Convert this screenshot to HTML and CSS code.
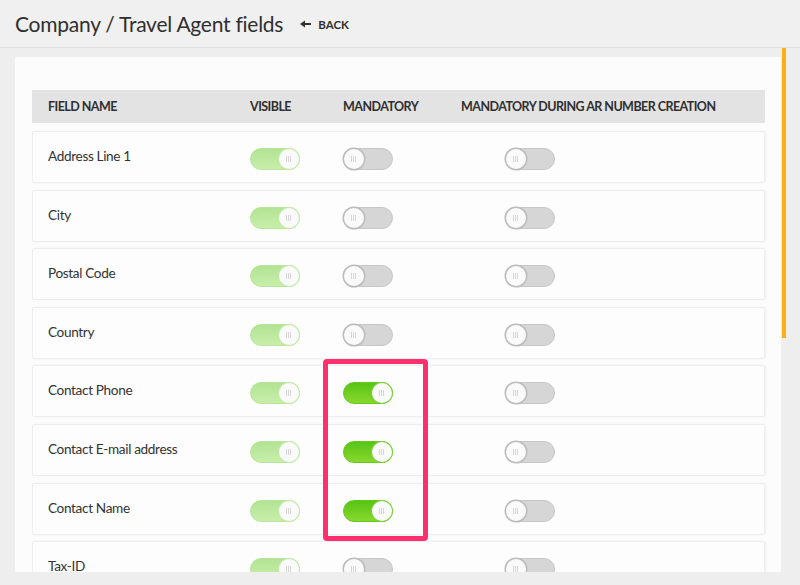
FILE: index.html
```html
<!DOCTYPE html>
<html>
<head>
<meta charset="utf-8">
<link rel="stylesheet" href="styles.css">
</head>
<body>
<header class="topbar">
  <h1 class="title">Company / Travel Agent fields</h1>
  <a class="back" href="#"><svg class="arrow" width="11" height="8" viewBox="0 0 11 8"><path d="M0 4 L5 0.5 L5 7.5 Z" fill="#2f2f2f"/><rect x="4" y="3" width="7" height="2" fill="#2f2f2f"/></svg>BACK</a>
</header>
<div class="viewport">
  <div class="card">
    <div class="thead">
      <div>FIELD NAME</div>
      <div>VISIBLE</div>
      <div>MANDATORY</div>
      <div>MANDATORY DURING AR NUMBER CREATION</div>
    </div>
    <div class="rows">
      <div class="row"><div class="name">Address Line 1</div><div><span class="tg vis"><i></i></span></div><div><span class="tg off"><i></i></span></div><div><span class="tg off ar"><i></i></span></div></div>
      <div class="row"><div class="name">City</div><div><span class="tg vis"><i></i></span></div><div><span class="tg off"><i></i></span></div><div><span class="tg off ar"><i></i></span></div></div>
      <div class="row"><div class="name">Postal Code</div><div><span class="tg vis"><i></i></span></div><div><span class="tg off"><i></i></span></div><div><span class="tg off ar"><i></i></span></div></div>
      <div class="row"><div class="name">Country</div><div><span class="tg vis"><i></i></span></div><div><span class="tg off"><i></i></span></div><div><span class="tg off ar"><i></i></span></div></div>
      <div class="row"><div class="name">Contact Phone</div><div><span class="tg vis"><i></i></span></div><div><span class="tg on"><i></i></span></div><div><span class="tg off ar"><i></i></span></div></div>
      <div class="row"><div class="name">Contact E-mail address</div><div><span class="tg vis"><i></i></span></div><div><span class="tg on"><i></i></span></div><div><span class="tg off ar"><i></i></span></div></div>
      <div class="row"><div class="name">Contact Name</div><div><span class="tg vis"><i></i></span></div><div><span class="tg on"><i></i></span></div><div><span class="tg off ar"><i></i></span></div></div>
      <div class="row"><div class="name">Tax-ID</div><div><span class="tg vis"><i></i></span></div><div><span class="tg off"><i></i></span></div><div><span class="tg off ar"><i></i></span></div></div>
    </div>
    <div class="highlight"></div>
  </div>
  <div class="thumb"></div>
</div>
</body>
</html>
```
FILE: styles.css
```css
* { box-sizing: border-box; }
html, body { margin: 0; padding: 0; }
body {
  background: #eeeeee;
  font-family: "Lato", "Liberation Sans", sans-serif;
  color: #333;
  width: 800px;
  height: 585px;
  overflow: hidden;
}
.topbar {
  height: 48px;
  border-bottom: 1px solid #e0e0e0;
  background: #f0f0f0;
  display: flex;
  align-items: center;
  padding-left: 15px;
}
.title {
  margin: 0;
  font-weight: 400;
  font-size: 21px;
  color: #2f2f2f;
  letter-spacing: -0.25px;
}
.back {
  margin-left: 17px;
  margin-top: 1px;
  font-size: 11.5px;
  font-weight: 700;
  color: #2f2f2f;
  text-decoration: none;
  display: flex;
  align-items: center;
}
.back .arrow {
  margin-right: 7px;
}
.viewport {
  position: relative;
  height: 524px;
  overflow: hidden;
  padding: 9px 19px 0 15px;
}
.card {
  position: relative;
  background: #fcfcfc;
  padding: 33px 16px 0 17px;
  height: 600px;
}
.thead, .row {
  display: grid;
  grid-template-columns: 202px 93px 118px 1fr;
  padding-left: 16px;
  align-items: center;
}
.thead {
  height: 33px;
  background: #e3e3e3;
  font-size: 12.5px;
  font-weight: 700;
  color: #2f2f2f;
  letter-spacing: -0.55px;
}
.rows {
  display: flex;
  flex-direction: column;
  gap: 6.6px;
  padding-top: 8px;
}
.row {
  height: 52px;
  border: 1px solid #eeeeee;
  border-radius: 2px;
  background: #fdfdfd;
  box-shadow: 1px 0 2px rgba(0,0,0,0.05);
  font-size: 13.6px;
  letter-spacing: -0.35px;
  color: #333;
  padding-left: 15px;
}
.row .name { margin-top: -2px; }
.tg {
  position: relative;
  display: block;
  width: 50px;
  height: 22px;
  border-radius: 11px;
  border: 1px solid #c9c9c9;
  margin-top: 4px;
}
.tg.ar { margin-left: 44px; }
.tg i {
  position: absolute;
  top: 0;
  width: 20px;
  height: 20px;
  border-radius: 50%;
  background: #fafafa;
}
.tg i::after {
  content: "";
  position: absolute;
  left: 7px;
  top: 7px;
  width: 5px;
  height: 6px;
  background: repeating-linear-gradient(90deg, #d6d6d6 0 1px, transparent 1px 2px);
}
.tg.vis {
  background: linear-gradient(#b2e394, #c8eeaa);
  border-color: #b6e69a;
}
.tg.vis i { right: 0; box-shadow: 0 0 0 1px #c2eba5; }
.tg.on {
  background: linear-gradient(#56c515, #8ad72d);
  border-color: #66c71c;
}
.tg.on i { right: 0; box-shadow: 0 0 0 1px #7fd03a; }
.tg.off {
  background: #d6d6d6;
  border-color: #c7c7c7;
}
.tg.off i { left: 0; box-shadow: 0 0 0 1.5px #bcbcbc; }
.highlight {
  position: absolute;
  left: 308px;
  top: 302px;
  width: 105px;
  height: 182px;
  border: 5px solid #fe2f6e;
  border-radius: 4px;
}
.thumb {
  position: absolute;
  right: 14px;
  top: 0;
  width: 4px;
  height: 290px;
  background: #ffae18;
}
```
